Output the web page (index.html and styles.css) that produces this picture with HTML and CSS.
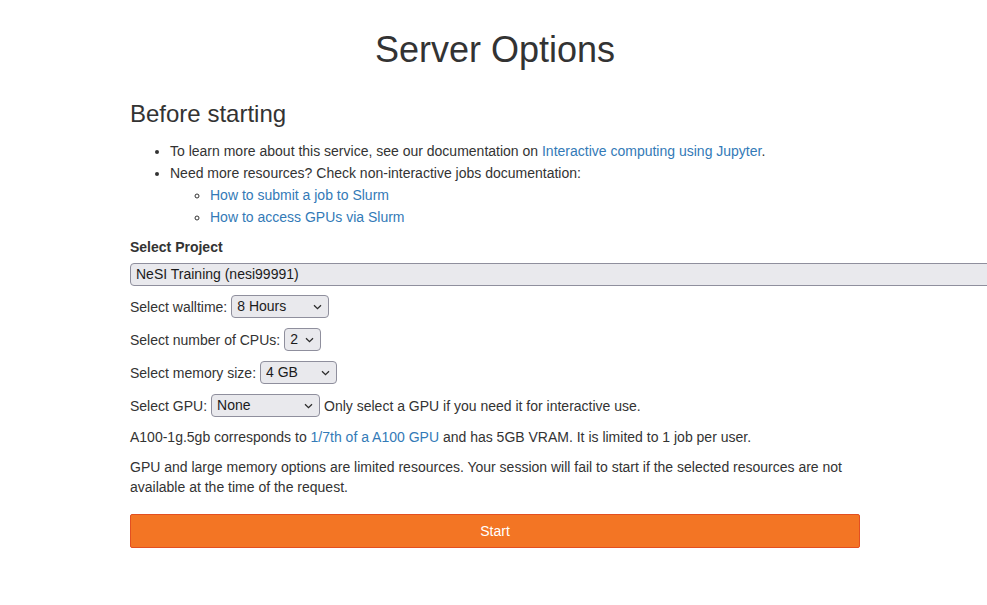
FILE: index.html
```html
<!DOCTYPE html>
<html lang="en">
<head>
<meta charset="utf-8">
<title>Server Options</title>
<link rel="stylesheet" href="styles.css">
</head>
<body>
<main class="page">
  <h1 class="title">Server Options</h1>
  <form class="spawn-form">
    <h2 class="section-title">Before starting</h2>
    <ul class="info-list">
      <li>To learn more about this service, see our documentation on <a href="#">Interactive computing using Jupyter</a>.</li>
      <li>Need more resources? Check non-interactive jobs documentation:
        <ul class="sub-list">
          <li><a href="#">How to submit a job to Slurm</a></li>
          <li><a href="#">How to access GPUs via Slurm</a></li>
        </ul>
      </li>
    </ul>

    <label class="field-title" for="project">Select Project</label>
    <div class="row row-project">
      <span class="select-wrap select-project">
        <select id="project"><option>NeSI Training (nesi99991)</option></select>
      </span>
    </div>

    <div class="row">
      <span>Select walltime:</span>
      <span class="select-wrap select-walltime">
        <select><option>8 Hours</option></select>
        <svg class="chev" width="9" height="6" viewBox="0 0 9 6"><path d="M1 1.2 4.5 4.6 8 1.2" fill="none" stroke="#2b2b2b" stroke-width="1.3"/></svg>
      </span>
    </div>

    <div class="row">
      <span>Select number of CPUs:</span>
      <span class="select-wrap select-cpu">
        <select><option>2</option></select>
        <svg class="chev" width="9" height="6" viewBox="0 0 9 6"><path d="M1 1.2 4.5 4.6 8 1.2" fill="none" stroke="#2b2b2b" stroke-width="1.3"/></svg>
      </span>
    </div>

    <div class="row">
      <span>Select memory size:</span>
      <span class="select-wrap select-mem">
        <select><option>4 GB</option></select>
        <svg class="chev" width="9" height="6" viewBox="0 0 9 6"><path d="M1 1.2 4.5 4.6 8 1.2" fill="none" stroke="#2b2b2b" stroke-width="1.3"/></svg>
      </span>
    </div>

    <div class="row">
      <span>Select GPU:</span>
      <span class="select-wrap select-gpu">
        <select><option>None</option></select>
        <svg class="chev" width="9" height="6" viewBox="0 0 9 6"><path d="M1 1.2 4.5 4.6 8 1.2" fill="none" stroke="#2b2b2b" stroke-width="1.3"/></svg>
      </span>
      <span>Only select a GPU if you need it for interactive use.</span>
    </div>

    <p class="note">A100-1g.5gb corresponds to <a href="#">1/7th of a A100 GPU</a> and has 5GB VRAM. It is limited to 1 job per user.</p>
    <p class="note">GPU and large memory options are limited resources. Your session will fail to start if the selected resources are not available at the time of the request.</p>

    <button type="button" class="btn-start">Start</button>
  </form>
</main>
</body>
</html>
```
FILE: styles.css
```css
html, body {
  overflow-x: hidden;
}

body {
  margin: 0;
  background: #fff;
  color: #333;
  font-family: "Liberation Sans", Arial, Helvetica, sans-serif;
  font-size: 14px;
  line-height: 20px;
}

a {
  color: #337ab7;
  text-decoration: none;
}

.page {
  width: 730px;
  margin-left: 130px;
}

.title {
  margin: 30px 0 0;
  font-size: 36px;
  line-height: 40px;
  font-weight: normal;
  text-align: center;
  color: #333;
}

.spawn-form {
  display: block;
}

.section-title {
  margin: 31px 0 13px;
  font-size: 24px;
  line-height: 26px;
  font-weight: normal;
  color: #333;
}

.info-list {
  margin: 0 0 9px;
  padding-left: 40px;
  line-height: 22px;
  list-style: disc;
}

.sub-list {
  margin: 0;
  padding-left: 40px;
  list-style: circle;
}

.field-title {
  display: block;
  font-weight: bold;
  margin-bottom: 6px;
}

.row {
  display: flex;
  align-items: center;
  gap: 4px;
  height: 23px;
  margin-bottom: 10px;
  white-space: nowrap;
}

.row-project {
  margin-bottom: 9px;
}

.select-wrap {
  position: relative;
  display: inline-flex;
  flex-shrink: 0;
  height: 23px;
}

.select-wrap select {
  -webkit-appearance: none;
  appearance: none;
  box-sizing: border-box;
  width: 100%;
  height: 23px;
  margin: 0;
  padding: 0 4px 0 5px;
  border: 1px solid #8f8f9d;
  border-radius: 4px;
  background: #e9e9ed;
  color: #1b1b1b;
  font-family: "Liberation Sans", Arial, Helvetica, sans-serif;
  font-size: 14px;
  line-height: 21px;
}

.chev {
  position: absolute;
  right: 7px;
  top: 9px;
  pointer-events: none;
}

.select-project { width: 900px; }
.select-walltime { width: 98px; }
.select-cpu { width: 37px; }
.select-mem { width: 77px; }
.select-gpu { width: 109px; }

.note {
  margin: 0 0 10px;
}

.btn-start {
  display: block;
  box-sizing: border-box;
  width: 730px;
  height: 34px;
  margin-top: 17px;
  padding: 6px 12px;
  border: 1px solid #e34f21;
  border-radius: 2px;
  background: #f37524;
  color: #fff;
  font-family: "Liberation Sans", Arial, Helvetica, sans-serif;
  font-size: 14px;
  line-height: 20px;
  text-align: center;
  cursor: pointer;
}
```
